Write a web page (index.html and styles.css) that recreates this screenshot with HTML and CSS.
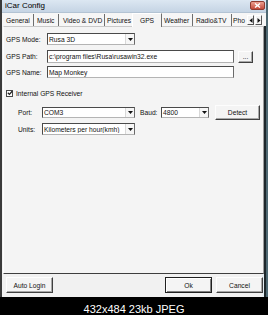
FILE: index.html
```html
<!DOCTYPE html>
<html>
<head>
<meta charset="utf-8">
<link rel="stylesheet" href="styles.css">
</head>
<body>
<div class="window">
  <div class="titlebar">
    <span class="title">iCar Config</span>
    <span class="close"><svg width="7" height="5" viewBox="0 0 7 5"><path d="M1 0.5 L6 4.5 M6 0.5 L1 4.5" stroke="#fff" stroke-width="1.4"/></svg></span>
  </div>
  <div class="tabs">
    <div class="tab t-general">General</div>
    <div class="tab t-music">Music</div>
    <div class="tab t-video">Video &amp; DVD</div>
    <div class="tab t-pictures">Pictures</div>
    <div class="tab t-gps sel">GPS</div>
    <div class="tab t-weather">Weather</div>
    <div class="tab t-radio">Radio&amp;TV</div>
    <div class="tab t-pho">Pho</div>
    <div class="scroll">
      <span class="sbtn"><svg width="4" height="5" viewBox="0 0 4 5"><path d="M3.5 0 L0.5 2.5 L3.5 5 Z" fill="#111"/></svg></span>
      <span class="sbtn"><svg width="4" height="5" viewBox="0 0 4 5"><path d="M0.5 0 L3.5 2.5 L0.5 5 Z" fill="#111"/></svg></span>
    </div>
  </div>
  <div class="panel">
    <div class="row r-mode">
      <span class="lbl">GPS Mode:</span>
      <div class="combo c-mode"><span class="val">Rusa 3D</span><span class="arrow"><svg width="5" height="3" viewBox="0 0 5 3"><path d="M0 0 L5 0 L2.5 3 Z" fill="#111"/></svg></span></div>
    </div>
    <div class="row r-path">
      <span class="lbl">GPS Path:</span>
      <div class="text t-wide">c:\program files\Rusa\rusawin32.exe</div>
      <div class="btn b-dots">...</div>
    </div>
    <div class="row r-name">
      <span class="lbl">GPS Name:</span>
      <div class="text t-wide t-short">Map Monkey</div>
    </div>
    <div class="row r-check">
      <span class="cbox"><svg width="6" height="6" viewBox="0 0 6 6"><path d="M0.8 2.8 L2.4 4.4 L5.2 1.2" stroke="#222" stroke-width="1.3" fill="none"/></svg></span>
      <span class="ctext">Internal GPS Receiver</span>
    </div>
    <div class="row r-port">
      <span class="lbl2">Port:</span>
      <div class="combo c-port"><span class="val">COM3</span><span class="arrow"><svg width="5" height="3" viewBox="0 0 5 3"><path d="M0 0 L5 0 L2.5 3 Z" fill="#111"/></svg></span></div>
      <span class="lbl-baud">Baud:</span>
      <div class="combo c-baud"><span class="val">4800</span><span class="arrow"><svg width="5" height="3" viewBox="0 0 5 3"><path d="M0 0 L5 0 L2.5 3 Z" fill="#111"/></svg></span></div>
      <div class="btn b-detect">Detect</div>
    </div>
    <div class="row r-units">
      <span class="lbl2">Units:</span>
      <div class="combo c-port c-units"><span class="val">Kilometers per hour(kmh)</span><span class="arrow"><svg width="5" height="3" viewBox="0 0 5 3"><path d="M0 0 L5 0 L2.5 3 Z" fill="#111"/></svg></span></div>
    </div>
  </div>
  <div class="footer">
    <div class="btn b-foot">Auto Login</div>
    <div class="spacer"></div>
    <div class="btn b-foot b-default">Ok</div>
    <div class="btn b-foot b-cancel">Cancel</div>
  </div>
</div>
<div class="caption">432x484 23kb JPEG</div>
</body>
</html>
```
FILE: styles.css
```css
* { box-sizing: border-box; }
html, body { margin: 0; padding: 0; }
body {
  width: 268px;
  height: 315px;
  overflow: hidden;
  background: #000;
  font-family: "Liberation Sans", Arial, sans-serif;
  font-size: 6.7px;
  color: #111;
}
.window {
  height: 297px;
  display: flex;
  flex-direction: column;
  background: #f1f1f1;
  border-left: 2px solid #3a3a3a;
  border-right: 2px solid #4e6872;
  box-shadow: inset -2px 0 0 #1d272b, inset -4px 0 0 #e6eef3;
}
.titlebar {
  height: 13px;
  flex: none;
  display: flex;
  align-items: flex-start;
  justify-content: space-between;
  padding: 0 1px 0 3px;
  background: linear-gradient(#dce7f2, #c5d4e4);
  border-bottom: 1px solid #b3c3d3;
}
.title { font-size: 8px; color: #000; line-height: 12px; }
.close {
  margin-top: 1px;
  width: 15px;
  height: 9px;
  border-radius: 2px;
  background: linear-gradient(#ec9f90, #c4493a);
  border: 1px solid #8e3b31;
  display: flex;
  align-items: center;
  justify-content: center;
}
.close svg { display: block; }
.tabs {
  height: 13px;
  flex: none;
  display: flex;
  align-items: flex-end;
  padding-left: 1px;
  background: #f6f6f6;
}
.tab {
  height: 12px;
  display: flex;
  align-items: center;
  padding-left: 3px;
  border-right: 1px solid #6e6e6e;
  white-space: nowrap;
  overflow: hidden;
  flex: none;
}
.t-general { width: 31px; }
.t-music { width: 25px; padding-left: 3px; }
.t-video { width: 46px; padding-left: 4px; }
.t-pictures { width: 27px; padding-left: 2px; border-right: none; }
.t-gps {
  width: 30px;
  height: 14px;
  margin-bottom: -1px;
  justify-content: center;
  padding: 0 0 1px 0;
  background: #f4f4f4;
  border-top: 1px solid #fff;
  border-left: 1px solid #fff;
  border-right: 1px solid #6e6e6e;
  position: relative;
  z-index: 1;
}
.t-weather { width: 31px; padding-left: 2px; }
.t-radio { width: 39px; padding-left: 3px; }
.t-pho { width: 14px; padding-left: 1px; border-right: none; }
.scroll {
  display: flex;
  gap: 1px;
  margin-left: 1px;
  margin-bottom: 1px;
}
.sbtn {
  width: 7px;
  height: 10px;
  display: flex;
  align-items: center;
  justify-content: center;
  background: #f4f4f4;
  border: 1px solid;
  border-color: #fff #555 #555 #fff;
}
.sbtn svg { display: block; }
.panel {
  flex: none;
  height: 248px;
  margin: 0 2px 0 1px;
  background: #f4f4f4;
  border-top: 1px solid #c9c9c9;
  border-left: 1px solid #fdfdfd;
  border-right: 1px solid #9c9c9c;
  border-bottom: 1px solid #3e3e3e;
  display: flex;
  flex-direction: column;
}
.row { display: flex; align-items: center; flex: none; }
.r-mode { margin-top: 6px; height: 12px; }
.r-path { margin-top: 5px; height: 13px; }
.r-name { margin-top: 3px; height: 12px; }
.r-check { margin-top: 11px; height: 8px; padding-left: 2px; }
.r-port { margin-top: 8px; height: 15px; padding-left: 14px; }
.r-units { margin-top: 3px; height: 12px; padding-left: 14px; }
.lbl { width: 43px; padding-left: 2px; white-space: nowrap; }
.lbl2 { width: 24px; white-space: nowrap; }
.lbl-baud { width: 21px; margin-left: 5px; white-space: nowrap; }
.text, .combo {
  background: #fff;
  border: 1px solid;
  border-color: #4a4a4a #6a6a6a #b4b4b4 #4a4a4a;
  display: flex;
  align-items: center;
  white-space: nowrap;
  overflow: hidden;
}
.text { padding-left: 1px; }
.t-wide { width: 187px; height: 13px; }
.t-short { height: 12px; }
.combo { height: 12px; }
.val { flex: 1; padding-left: 1px; overflow: hidden; }
.arrow {
  width: 9px;
  height: 100%;
  display: flex;
  align-items: center;
  justify-content: center;
  border-left: 1px solid #d8d8d8;
  background: #f6f6f6;
}
.arrow svg { display: block; }
.c-mode { width: 88px; }
.c-port { width: 93px; height: 11px; }
.c-units { height: 12px; }
.c-baud { width: 48px; height: 11px; }
.btn {
  background: #f4f4f4;
  border: 1px solid;
  border-color: #fdfdfd #404040 #404040 #fdfdfd;
  box-shadow: inset -1px -1px 0 #a8a8a8;
  display: flex;
  align-items: center;
  justify-content: center;
  white-space: nowrap;
  flex: none;
}
.b-dots { width: 15px; height: 12px; margin-left: 4px; align-items: flex-end; padding-bottom: 2px; }
.b-detect { width: 45px; height: 15px; margin-left: 6px; }
.cbox {
  width: 7px;
  height: 7px;
  background: #fff;
  border: 1px solid #4a4a4a;
  display: flex;
  align-items: center;
  justify-content: center;
}
.cbox svg { display: block; flex: none; }
.ctext { margin-left: 3px; white-space: nowrap; }
.footer {
  flex: 1;
  display: flex;
  align-items: flex-start;
  padding: 3px 3px 0 4px;
}
.spacer { flex: 1; }
.b-foot { width: 47px; height: 16px; }
.b-default {
  border-color: #202020;
  box-shadow: inset 1px 1px 0 #fff, inset -1px -1px 0 #808080;
}
.b-cancel { margin-left: 4px; }
.caption {
  height: 18px;
  padding-top: 6px;
  line-height: 12px;
  font-size: 11px;
  color: #fff;
  text-align: center;
  white-space: nowrap;
}
```
